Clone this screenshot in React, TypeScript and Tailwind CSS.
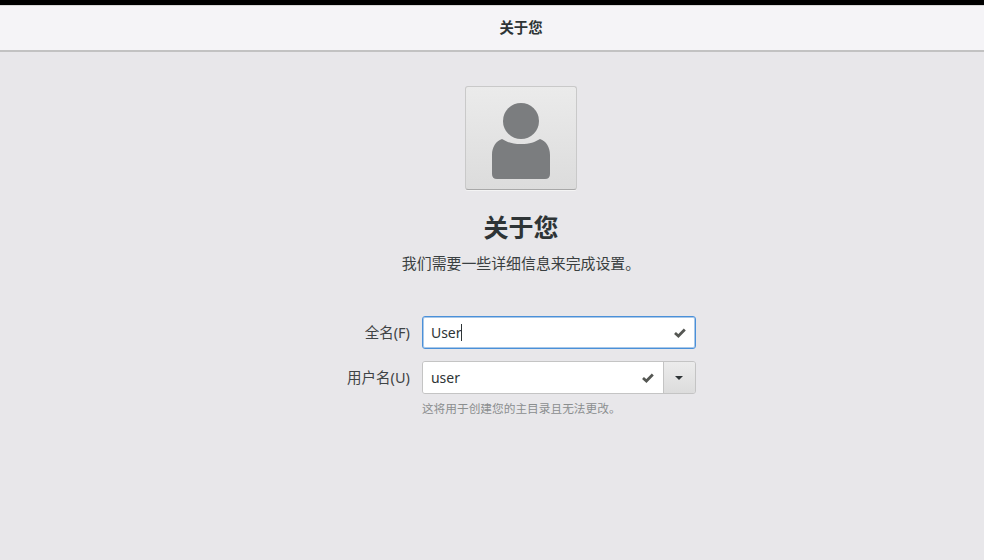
const font = '[font-family:"Noto_Sans","Noto_Sans_CJK_SC",sans-serif]'

function CheckIcon() {
  return (
    <svg width="12" height="10" viewBox="0 0 12 10" className="shrink-0">
      <path d="M1 5 L4.4 8 L10.8 1.6" fill="none" stroke="#555753" strokeWidth="2.8" />
    </svg>
  )
}

function Avatar() {
  return (
    <button className="flex h-[104px] w-[112px] items-center justify-center rounded-[3px] border border-[#c9c9c9] border-b-[#a8a8a8] bg-gradient-to-b from-[#ebebeb] to-[#dcdcdc] pt-[8px] shadow-[0_1px_0_#f4f4f4]">
      <svg width="60" height="78" viewBox="0 0 60 78">
        <circle cx="30" cy="18" r="18" fill="#7b7d7f" />
        <path
          d="M11 36 C 16 39 21 41 30 41 C 39 41 44 39 49 36 C 55 38 59 44 59 52 L59 71 Q59 76 54 76 L6 76 Q1 76 1 71 L1 52 C1 44 5 38 11 36 Z"
          fill="#7b7d7f"
        />
      </svg>
    </button>
  )
}

export default function App() {
  return (
    <div className={`flex h-[560px] w-[984px] flex-col overflow-hidden bg-[#e8e7ea] ${font}`}>
      <div className="h-[5px] shrink-0 bg-black" />
      <header className="flex h-[47px] shrink-0 items-center justify-center border-t border-b-2 border-t-[#d8d8d8] border-b-[#c2c2c2] bg-[#f5f4f7] pl-[58px]">
        <span className="text-[14.4px] font-bold text-[#2e3436]">关于您</span>
      </header>

      <main className="flex flex-col items-center pt-[34px] pl-[58px]">
        <Avatar />
        <h1 className="mt-[19px] text-[25px] leading-[36px] font-bold text-[#2e3436]">关于您</h1>
        <p className="mt-[8px] text-[14.9px] leading-[20px] text-[#3a3f41]">我们需要一些详细信息来完成设置。</p>

        <div className="mt-[43px] ml-[1px] grid grid-cols-[auto_274px] items-center gap-x-[12px] gap-y-[12px]">
          <label className="text-right text-[14.5px] text-[#3f4345]">全名(F)</label>
          <div className="flex h-[33px] items-center justify-between rounded-[3px] border border-[#4a90d9] bg-white pr-[9px] pl-[8px] shadow-[inset_0_0_0_1px_#a9c8e8]">
            <span className="flex items-center text-[14px] text-[#2e3436]">
              User
              <span className="-ml-[1px] h-[17px] w-[1px] bg-[#2e3436]" />
            </span>
            <CheckIcon />
          </div>

          <label className="text-right text-[14.5px] text-[#3f4345]">用户名(U)</label>
          <div className="flex h-[33px] overflow-hidden rounded-[3px] border border-[#c4c4c4]">
            <div className="flex flex-1 items-center justify-between bg-white pr-[9px] pl-[8px]">
              <span className="text-[14px] text-[#2e3436]">user</span>
              <CheckIcon />
            </div>
            <div className="flex w-[32px] items-center justify-center border-l border-[#c4c4c4] bg-gradient-to-b from-[#ececec] to-[#dcdcdc]">
              <span className="h-0 w-0 border-x-[4px] border-t-[4px] border-x-transparent border-t-[#2e3436]" />
            </div>
          </div>

          <span />
          <p className="-mt-[5px] text-[11.7px] leading-[14px] text-[#8b8e8f]">这将用于创建您的主目录且无法更改。</p>
        </div>
      </main>
    </div>
  )
}
